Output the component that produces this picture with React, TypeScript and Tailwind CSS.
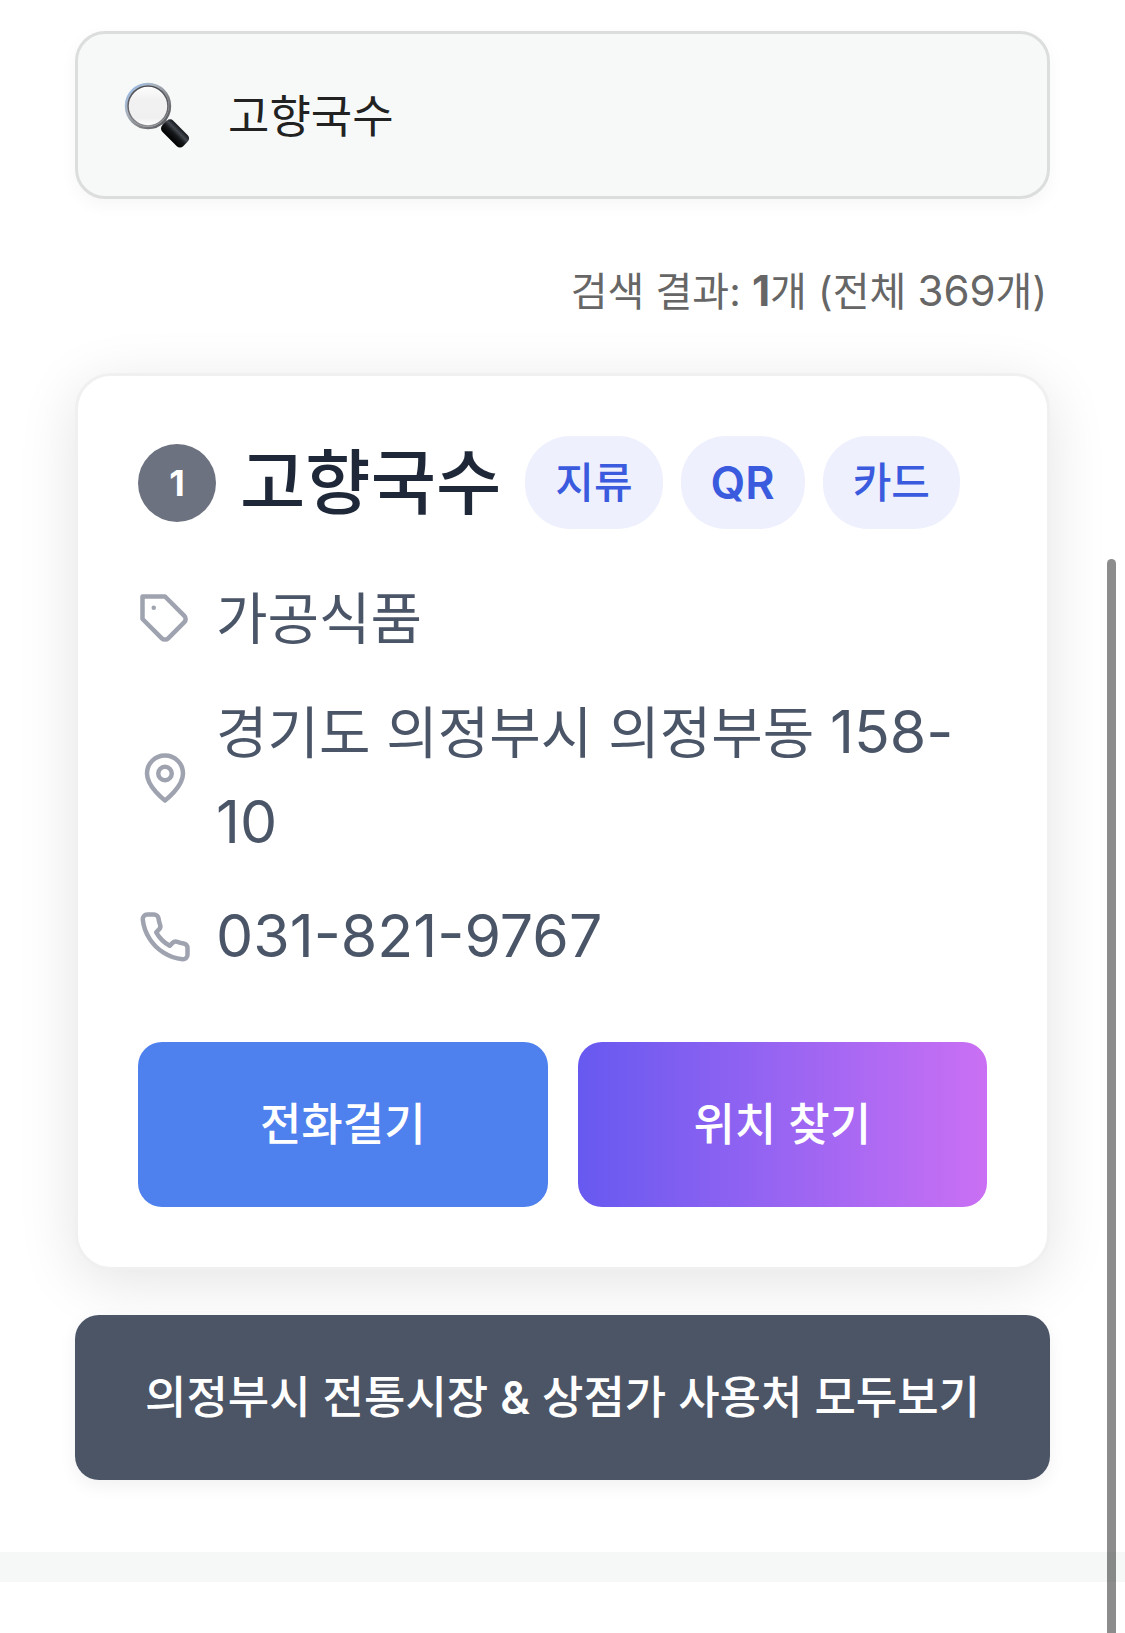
import React, { useState } from 'react';

interface Store {
    id: number;
    name: string;
    payments: string[];
    category: string;
    address: string;
    lot: string;
    phone: string;
}

const TOTAL_COUNT = 369;

const stores: Store[] = [
    {
        id: 1,
        name: '고향국수',
        payments: ['지류', 'QR', '카드'],
        category: '가공식품',
        address: '경기도 의정부시 의정부동',
        lot: '158-10',
        phone: '031-821-9767',
    },
];

const iconProps = {
    viewBox: '0 0 24 24',
    fill: 'none',
    stroke: 'currentColor',
    strokeWidth: 2,
    strokeLinecap: 'round' as const,
    strokeLinejoin: 'round' as const,
    'aria-hidden': true,
    className: 'size-[54px] shrink-0 text-[#9fa3b0]',
};

const TagIcon = () => (
    <svg {...iconProps}>
        <path d="M20.59 13.41l-7.17 7.17a2 2 0 0 1-2.83 0L2 12V2h10l8.59 8.59a2 2 0 0 1 0 2.82z" />
        <path d="M7 7h.01" />
    </svg>
);

const PinIcon = () => (
    <svg {...iconProps}>
        <path d="M20 10c0 6-8 12-8 12s-8-6-8-12a8 8 0 0 1 16 0z" />
        <circle cx="12" cy="10" r="3" />
    </svg>
);

const PhoneIcon = () => (
    <svg {...iconProps}>
        <path d="M22 16.92v3a2 2 0 0 1-2.18 2 19.79 19.79 0 0 1-8.63-3.07 19.5 19.5 0 0 1-6-6 19.79 19.79 0 0 1-3.07-8.67A2 2 0 0 1 4.11 2h3a2 2 0 0 1 2 1.72 12.84 12.84 0 0 0 .7 2.81 2 2 0 0 1-.45 2.11L8.09 9.91a16 16 0 0 0 6 6l1.27-1.27a2 2 0 0 1 2.11-.45 12.84 12.84 0 0 0 2.81.7A2 2 0 0 1 22 16.92z" />
    </svg>
);

const MagnifierIcon = () => (
    <svg viewBox="0 0 66 66" aria-hidden="true" className="size-[66px] shrink-0">
        <defs>
            <linearGradient id="rim" x1="0" y1="0" x2="1" y2="1">
                <stop offset="0.1" stopColor="#9dbbe4" />
                <stop offset="0.35" stopColor="#a9b2bd" />
                <stop offset="0.6" stopColor="#85878b" />
                <stop offset="1" stopColor="#4c4f53" />
            </linearGradient>
            <linearGradient id="innerRim" x1="0" y1="0" x2="0" y2="1">
                <stop offset="0" stopColor="#4a4d52" />
                <stop offset="0.6" stopColor="#66686c" />
                <stop offset="1" stopColor="#8b8d90" />
            </linearGradient>
            <linearGradient id="lens" x1="0" y1="0" x2="0" y2="1">
                <stop offset="0" stopColor="#fdfdfd" />
                <stop offset="0.35" stopColor="#f2f1f2" />
                <stop offset="0.8" stopColor="#f1f0f1" />
                <stop offset="1" stopColor="#fff" />
            </linearGradient>
            <linearGradient id="grip" x1="0" y1="0" x2="0" y2="1">
                <stop offset="0" stopColor="#14171c" />
                <stop offset="0.3" stopColor="#43484f" />
                <stop offset="0.55" stopColor="#15171a" />
                <stop offset="1" stopColor="#000" />
            </linearGradient>
        </defs>
        <path d="M37 37L43 43" stroke="#6d7074" strokeWidth="6" />
        <circle cx="24" cy="24" r="22" fill="#dfe3e8" stroke="url(#rim)" strokeWidth="2.4" />
        <circle cx="24" cy="24" r="20" fill="url(#lens)" stroke="url(#innerRim)" strokeWidth="1.6" />
        <rect x="36.5" y="43.7" width="29.5" height="15.5" rx="4.5" fill="url(#grip)" transform="rotate(45 51.2 51.2)" />
    </svg>
);

const InfoRow: React.FC<{ icon: React.ReactNode; children: React.ReactNode }> = ({ icon, children }) => (
    <li className="flex items-center gap-6">
        {icon}
        <span>{children}</span>
    </li>
);

const StoreCard: React.FC<{ store: Store }> = ({ store }) => (
    <article className="rounded-[36px] border-[3px] border-[#f0f0f0] bg-white p-[60px] shadow-[0_12px_60px_rgba(0,0,0,0.11)]">
        <header className="flex items-center gap-6">
            <span className="flex size-[78px] shrink-0 items-center justify-center rounded-full bg-[#6c7280] text-[36px] font-bold text-white">
                {store.id}
            </span>
            <h2 className="text-[71px] leading-[93px] font-medium whitespace-nowrap text-[#1f2838]">{store.name}</h2>
            <ul className="flex gap-[18px]">
                {store.payments.map(payment => (
                    <li
                        key={payment}
                        className={`rounded-[45px] bg-[#eef0fd] px-[30px] leading-[93px] whitespace-nowrap text-[#3b5bdf] ${
                            payment === 'QR' ? 'text-[45px] font-semibold' : 'text-[42px] font-medium'
                        }`}
                    >
                        {payment}
                    </li>
                ))}
            </ul>
        </header>
        <ul className="mt-[45px] flex flex-col gap-6 text-[56px] leading-[90px] text-[#4a5568]">
            <InfoRow icon={<TagIcon />}>{store.category}</InfoRow>
            <InfoRow icon={<PinIcon />}>
                {store.address}{' '}
                {/* the lot number may break after its hyphen */}
                {store.lot.split(/(?<=-)/).map(part => (
                    <span key={part} className="text-[59px] leading-none">
                        {part}
                    </span>
                ))}
            </InfoRow>
            <InfoRow icon={<PhoneIcon />}>
                <span className="text-[59px] leading-none">{store.phone}</span>
            </InfoRow>
        </ul>
        <div className="mt-[60px] grid grid-cols-2 gap-[30px] text-[45px] leading-[165px] font-medium text-white">
            <button type="button" className="rounded-3xl bg-[#4e81ee]">
                전화걸기
            </button>
            <button type="button" className="rounded-3xl bg-linear-to-r/srgb from-[#6759f0] to-[#ca70f4]">
                위치 찾기
            </button>
        </div>
    </article>
);

export default function App() {
    const [query, setQuery] = useState('고향국수');
    const results = stores.filter(store => store.name.includes(query.trim()));

    return (
        <div className="min-h-screen bg-white font-['Inter','Noto_Sans_CJK_KR',sans-serif]">
            <main className="px-[75px] pt-[31px] pb-[72px]">
                <label className="flex h-[168px] items-center gap-[38px] rounded-[30px] border-[3px] border-[#dcdddd] bg-[#f7f9f8] px-[46px] shadow-[0_6px_18px_rgba(0,0,0,0.04)]">
                    <MagnifierIcon />
                    <input
                        type="text"
                        aria-label="상점 검색"
                        value={query}
                        onChange={e => setQuery(e.target.value)}
                        className="min-w-0 flex-1 bg-transparent pt-1 text-[45px] text-[#222] outline-none"
                    />
                </label>

                <p className="mt-[60px] pr-[3px] text-right text-[40px] leading-[66px] text-[#666]">
                    검색 결과: <strong className="text-[42px] leading-none">{results.length}</strong>개 (전체{' '}
                    <span className="text-[42px] leading-none">{TOTAL_COUNT}</span>개)
                </p>

                <div className="mt-12 flex flex-col gap-[45px]">
                    {results.map(store => (
                        <StoreCard key={store.id} store={store} />
                    ))}
                    <button
                        type="button"
                        className="rounded-3xl bg-[#4c5566] text-[45px] leading-[165px] font-medium text-white shadow-[0_6px_18px_rgba(0,0,0,0.06)]"
                    >
                        의정부시 전통시장 <span className="font-semibold">&amp;</span> 상점가 사용처 모두보기
                    </button>
                </div>
            </main>
            <div className="h-[30px] bg-[#f6f8f7]" />

            {/* scroll indicator */}
            <div className="fixed top-[559px] right-[9px] bottom-0 w-[9px] rounded-t-full bg-black/45" />
        </div>
    );
}
